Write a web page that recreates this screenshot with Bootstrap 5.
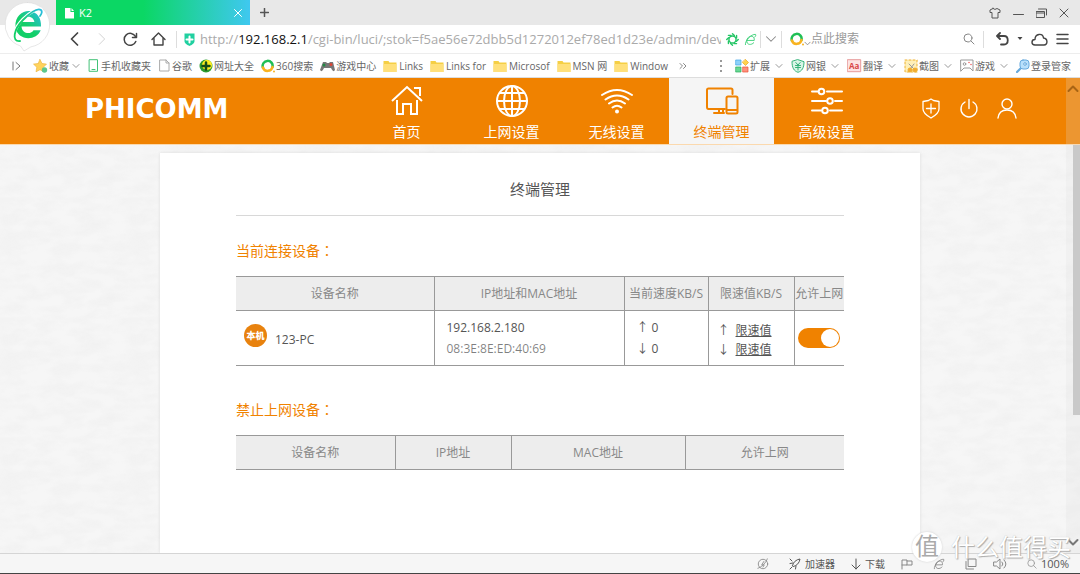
<!DOCTYPE html>
<html lang="zh-CN">
<head>
<meta charset="utf-8">
<meta name="viewport" content="width=device-width, initial-scale=1">
<title>K2</title>
<link href="https://cdn.jsdelivr.net/npm/bootstrap@5.3.0/dist/css/bootstrap.min.css" rel="stylesheet">
<style>
:root{--brand:#f08200}
body{font-family:"Open Sans","Noto Sans CJK SC",sans-serif;font-size:12px;line-height:16px;color:#555;background:#fff;overflow:hidden}
button{border:0;background:none;padding:0;color:inherit;font:inherit;display:flex;align-items:center;justify-content:center}
a{color:inherit;text-decoration:none}
svg{flex:none;display:block;fill:none;stroke:currentColor;stroke-linecap:round;stroke-linejoin:round}
svg.filled{stroke:none}
svg .f{fill:currentColor;stroke:none}
h1,h2{margin:0;font-weight:400}
.tabs{height:25px;background:#e8e8e8;padding-left:56px}
.page-tab{width:194px;background:linear-gradient(90deg,#0bd764 45%,#3fc8f0);color:#fff;font-size:11px;padding:0 8px}
.new-tab{width:28px}
.window-btns{gap:12px;padding-right:11px}
.brand-e{position:absolute;left:3px;top:0;z-index:3}
.address{height:28px;background:#fff;padding-left:60px}
.tool{width:28px;color:#444;flex:none}
.vr-line{width:1px;height:17px;background:#ddd;flex:none}
.url-box{gap:5px;padding:0 3px 0 7px;min-width:0}
.url{font-size:13px;color:#aaa;white-space:nowrap;overflow:hidden;min-width:0;width:0}
.url b{font-weight:400;color:#111}
.finder{width:201px;flex:none;color:#888}
.finder input{font-size:12px;line-height:16px;border:0;padding:0;outline:0;min-width:0;flex:1;background:none}
.finder input::placeholder{color:#999}
.endtools{width:96px;padding:0 11px 0 12px;color:#444;flex:none}
.marks{height:25px;border-top:1px solid #ededed;border-bottom:1px solid #ddd;font-size:10px;color:#666;padding:0 9px 0 12px;white-space:nowrap}
.marks a,.marks button{display:flex;align-items:center;gap:1px}
.marks .folder-link{gap:2px}
.marks .drop{margin-left:2px;color:#999}
.saved{gap:7px}
.extras{gap:8px}
.view{background-color:#f6f6f6;background-image:url("data:image/svg+xml,%3Csvg xmlns='http://www.w3.org/2000/svg' width='128' height='120'%3E%3Cfilter id='a' x='0' y='0' width='100%25' height='100%25'%3E%3CfeTurbulence type='fractalNoise' baseFrequency='.04 .09' numOctaves='3' stitchTiles='stitch'/%3E%3CfeColorMatrix values='0 0 0 0 .5 0 0 0 0 .5 0 0 0 0 .5 .17 0 0 0 -.06'/%3E%3C/filter%3E%3Crect width='128' height='120' filter='url(%23a)'/%3E%3C/svg%3E")}
.site-nav{height:66px;background:var(--brand);color:#fff;padding-left:85px;box-shadow:0 1px 0 #fbd9ae}
.wordmark{font:bold 26px/28px "DejaVu Sans",sans-serif;width:269px;margin-top:-4px}
.site-nav .entry{width:105px;font-size:14px;line-height:20px;padding-top:6px}
.site-nav .entry svg{margin-bottom:4px;stroke-width:2}
.site-nav .entry.active{background:#f5f5f5;color:var(--brand)}
.account{gap:18px;margin-left:42px;margin-bottom:6px}
.panel{width:71%;max-width:760px;background:#fff;margin:9px auto 0;padding:26px 76px 0;box-shadow:0 0 3px #ddd}
.panel h1{font-size:15px;line-height:20px;text-align:center;padding-bottom:16px;border-bottom:1px solid #d8d8d8}
.panel h2{font-size:14px;line-height:20px;color:var(--brand);margin-top:25px}
.panel .grid+h2{margin-top:34px}
.colon{font-family:"Noto Sans CJK TC",sans-serif;line-height:16px}
.grid{table-layout:fixed;width:100%;margin-top:15px;border-top:1px solid #999;border-bottom:1px solid #999}
.grid th{height:34px;background:#ededed;color:#888;font-weight:400;text-align:center;padding:0;white-space:nowrap}
.grid td{height:55px;border-top:1px solid #999;padding:0 0 0 12px}
.grid th+th,.grid td+td{border-left:1px solid #999}
.w-a{width:190px}.w-b{width:84px}.w-c{width:86px}.w-d{width:50px}
.w-e{width:116px}.w-f{width:174px}.w-g{width:159px}
.own{width:23px;height:23px;border-radius:50%;background:#e8820e;color:#fff;font-size:9px;font-weight:900;line-height:23px;text-align:center;margin:-5px 0 0 -4px}
.stack{line-height:21px}
.grid .stack-sm{line-height:19px;padding:3px 0 0 9px}
.limit{text-decoration:underline;margin-left:6px}
.form-switch .allow{width:42px;height:20px;margin:0;float:none;border:0;background-color:var(--brand);background-size:20px;box-shadow:none;display:block}
.form-switch .allow:checked{background-color:var(--brand);border-color:var(--brand);background-image:url("data:image/svg+xml,%3Csvg xmlns='http://www.w3.org/2000/svg' viewBox='-10 -10 20 20'%3E%3Ccircle r='9' fill='%23fff'/%3E%3C/svg%3E")}
.grid .cell-switch{padding:0 0 0 3px}
.rail{position:absolute;right:0;top:0;bottom:0;width:14px;background:rgba(225,225,225,.22)}
.rail i{width:7px;background:#c9c9c9;margin-top:67px;height:270px}
.rail svg{position:absolute;left:1px;color:#777}
.rail .up{top:6px;color:#a86414}.rail .down{bottom:6px}
.statusbar{height:21px;background:#f6f6f6;border-top:1px solid #d5d5d5;border-bottom:1px solid #444;font-size:10px;padding-right:11px;color:#555}
.statusbar .quiet{color:#888}
.zoom-level{font-size:11px}
.watermark{position:absolute;right:9px;bottom:11px;z-index:4;color:#fff;font-size:24px;line-height:32px;text-shadow:1px 1px 1px #aaa,0 0 1px #bbb;gap:9px;pointer-events:none}
.watermark span{width:30px;height:30px;border-radius:50%;background:#fff;color:#aaa;line-height:28px;text-align:center;text-shadow:none;box-shadow:0 0 2px #ccc}
</style>
</head>
<body class="vh-100 d-flex flex-column position-relative">
<svg width="0" height="0" class="position-absolute">
<symbol id="chev" viewBox="0 0 8 8"><path d="M1 2.500l3 3 3-3"/></symbol>
<symbol id="folder" viewBox="0 0 14 14"><path d="M.5 2h5l1 1.500h7V13H.5z" fill="#f5cf45" stroke="none"/><path d="M.5 5h13v8H.5z" fill="#ffe07a" stroke="none"/></symbol>
<symbol id="lens" viewBox="0 0 12 12"><circle cx="5" cy="5" r="4"/><path d="M8 8l3 3"/></symbol>
<symbol id="ring" viewBox="0 0 14 14"><path d="M1.900 8.500A5 5 0 1 1 11.500 8" stroke="#1fbf55" stroke-width="2.500"/><path d="M1.900 8.500A5 5 0 0 0 11.500 8" stroke="#f8b320" stroke-width="2.500"/><circle cx="13" cy="12.500" r="1" fill="#f8b320" stroke="none"/></symbol>
<symbol id="orbit-e" viewBox="0 0 14 14"><path d="M3 8h8c1-6-7-6-8 0-.5 5 5 5.500 7.500 2.500M1.500 12.500C1 8 8 1 12.500 1.500c1 1-1 3-1 3"/></symbol>
</svg>

<div class="brand-e"><svg class="filled" width="50" height="52" viewBox="0 0 50 52"><path d="M24.500 2.500a22.300 22.300 0 0 1 3.500 44.300L21 51l-3.500-5A22.300 22.300 0 0 1 24.500 2.500z" fill="#fff" stroke="#ddd" stroke-width=".7"/><defs><linearGradient id="eg" x1="0" y1="1" x2="1" y2="0"><stop offset=".45" stop-color="#12cf68"/><stop offset="1" stop-color="#2bbde5"/></linearGradient></defs><path fill="url(#eg)" fill-rule="evenodd" d="M38 26.500H18.500c.5 8 10 8 12 3.700h7.200C33.500 41.500 14 41 12.500 27 11.500 15 21 10 27 11c7 1 11.500 7 11 15.500zM18.700 22h12.700c-1-7-11.500-7-12.700 0z"/><path fill="none" stroke="#fff" stroke-width="3" d="M15 40C8 38 12 27 20 19c7-7 15-11 18-10"/><path fill="none" stroke="url(#eg)" stroke-width="1.800" d="M17 41C8 42 11 29 20 20c8-8 15-12 18-10 1.500 1.500.5 4-1 6"/></svg></div>

<div class="tabs d-flex flex-none">
 <div class="page-tab d-flex align-items-center"><svg width="11" height="12" viewBox="0 0 11 12"><path class="f" d="M1 1h5.500v4H10v6.500H1z"/><path class="f" d="M7.500 1L10 4H7.500z"/></svg><span class="ms-1">K2</span><button class="ms-auto" aria-label="关闭"><svg width="8" height="8" viewBox="0 0 8 8"><path d="M.5.5l7 7m0-7l-7 7"/></svg></button></div>
 <button class="new-tab" aria-label="新标签"><svg width="9" height="9" viewBox="0 0 9 9" stroke-width="1.500"><path d="M4.500.5v8M.5 4.500h8"/></svg></button>
 <div class="window-btns d-flex align-items-center ms-auto">
  <button aria-label="皮肤"><svg width="12" height="12" viewBox="0 0 12 12"><path d="M4 1.500L1 3v2.500h2V11h6V5.500h2V3L8 1.500Q6 3.500 4 1.500z"/></svg></button>
  <button aria-label="最小化"><svg width="11" height="12" viewBox="0 0 11 12"><path d="M.5 7.500h10"/></svg></button>
  <button aria-label="还原"><svg width="11" height="12" viewBox="0 0 11 12"><path d="M.5 4.500h8v6h-8zM.5 6h8M2.500 2h8v6"/></svg></button>
  <button aria-label="关闭窗口"><svg width="10" height="12" viewBox="0 0 10 12"><path d="M1 2l8 8m0-8l-8 8"/></svg></button>
 </div>
</div>

<div class="address d-flex align-items-center flex-none">
 <button class="tool" aria-label="后退"><svg width="9" height="14" viewBox="0 0 9 14" stroke-width="1.700"><path d="M7.500 1L1.500 7l6 6"/></svg></button>
 <button class="tool" aria-label="前进"><svg width="8" height="14" viewBox="0 0 9 14" color="#ccc"><path d="M1.500 1l6 6-6 6"/></svg></button>
 <button class="tool" aria-label="刷新"><svg width="15" height="15" viewBox="0 0 15 15" stroke-width="1.500"><path d="M12.800 9.500A6 6 0 1 1 12.500 4.500M13.500 1.500v4h-4"/></svg></button>
 <button class="tool" aria-label="主页"><svg width="15" height="14" viewBox="0 0 15 14" stroke-width="1.400"><path d="M1 7.500l6.500-6.500L14 7.500M3 6.500V13h9V6.500"/></svg></button>
 <div class="vr-line ms-1"></div>
 <div class="url-box d-flex align-items-center flex-fill">
  <svg class="filled" width="11" height="13" viewBox="0 0 11 13"><path fill="#20d0a0" d="M.5.5h10V8c0 2.500-3 4-5 5-2-1-5-2.500-5-5z"/><path d="M5.500 3.500v6m-3-3h6" stroke="#fff" stroke-width="2"/></svg>
  <div class="url flex-fill" role="textbox" aria-label="地址" contenteditable="true" spellcheck="false">http://<b>192.168.2.1</b>/cgi-bin/luci/;stok=f5ae56e72dbb5d1272012ef78ed1d23e/admin/devi</div>
  <svg width="13" height="13" viewBox="0 0 14 14" color="#24c566" stroke-width="1.500"><circle cx="7" cy="7" r="3.800"/><path d="M7 .8l2 2M11.400 2.600v2.800M13.200 7l-2 2M11.400 11.400H8.600M7 13.200l-2-2M2.600 11.400V8.600M.8 7l2-2M2.600 2.600h2.800"/></svg>
  <svg width="13" height="13" color="#3ccf78"><use href="#orbit-e"/></svg>
 </div>
 <div class="vr-line"></div>
 <button class="px-1" aria-label="历史"><svg width="12" height="12" viewBox="0 0 8 8" color="#888" stroke-width=".7"><use href="#chev"/></svg></button>
 <div class="vr-line"></div>
 <div class="finder d-flex align-items-center">
  <svg class="ms-2" width="14" height="14"><use href="#ring"/></svg><svg width="7" height="7" class="mt-2"><use href="#chev"/></svg>
  <input type="text" placeholder="点此搜索" aria-label="点此搜索"><button class="me-2" aria-label="搜索"><svg width="12" height="12"><use href="#lens"/></svg></button>
 </div>
 <div class="vr-line"></div>
 <div class="endtools d-flex align-items-center justify-content-between">
  <button aria-label="撤销"><svg width="13" height="14" viewBox="0 0 13 14" stroke-width="1.800"><path d="M4 1L1 4l3 3M1.500 4H8c5 0 5 8.500 0 8.500H5"/></svg></button>
  <svg width="6" height="4" viewBox="0 0 6 4"><path class="f" d="M.5 0h5L3 3z"/></svg>
  <button aria-label="云"><svg width="17" height="13" viewBox="0 0 17 13" stroke-width="1.400"><path d="M4 12C0 12 0 6.500 4 6.500 4 0 12 0 12.500 5c4.500.5 4.500 7 .5 7z"/></svg></button>
  <button aria-label="菜单"><svg width="13" height="12" viewBox="0 0 13 12" stroke-width="1.500"><path d="M1 1.500h11M1 6h11M1 10.500h11"/></svg></button>
 </div>
</div>

<div class="marks d-flex align-items-center flex-none">
 <button class="me-2 pe-1" aria-label="展开"><svg width="9" height="10" viewBox="0 0 9 10" color="#777"><path d="M1 1v8M4 1.500L8 5 4 8.500"/></svg></button>
 <div class="saved d-flex align-items-center">
  <button><svg class="filled" width="15" height="14" viewBox="0 0 15 14"><path fill="#ffd35c" stroke="#e9ae36" stroke-width=".6" d="M7 .5l2 4 4.500.6-3.200 3.200.8 4.500L7 10.700l-4 2.100.8-4.500L.5 5.100 5 4.500z"/><circle cx="11.500" cy="11" r="2.700" fill="#5cc78d"/></svg>收藏<svg class="drop" width="8" height="8"><use href="#chev"/></svg></button>
  <a href="#"><svg width="13" height="13" viewBox="0 0 13 13" color="#43c277"><path d="M2.500.7h8v11.600h-8zM5 10.500h3"/></svg>手机收藏夹</a>
  <a href="#"><svg width="13" height="13" viewBox="0 0 13 13" color="#aaa"><path d="M2 1h6l3 3v8H2zM8 1v3h3"/></svg>谷歌</a>
  <a href="#"><svg class="filled" width="14" height="14" viewBox="0 0 14 14"><circle cx="7" cy="7" r="6.500" fill="#2c9b2e"/><circle cx="8" cy="6" r="5" fill="#ffee20"/><path d="M7 3.500v7M3.500 7h7" stroke="#164d18" stroke-width="2.500"/></svg>网址大全</a>
  <a href="#"><svg width="14" height="14"><use href="#ring"/></svg>360搜索</a>
  <a href="#"><svg class="filled" width="15" height="12" viewBox="0 0 15 12"><path fill="#777" d="M3 2h3l1 1h2l1-1h3l2 8q-2 3-4-2H4q-2 5-4 2z"/><circle cx="4" cy="5" r="1.500" fill="#284"/><circle cx="11" cy="4.500" r="1.500" fill="#d43"/></svg>游戏中心</a>
  <a href="#" class="folder-link"><svg width="14" height="14"><use href="#folder"/></svg>Links</a>
  <a href="#" class="folder-link"><svg width="14" height="14"><use href="#folder"/></svg>Links for</a>
  <a href="#" class="folder-link"><svg width="14" height="14"><use href="#folder"/></svg>Microsof</a>
  <a href="#" class="folder-link"><svg width="14" height="14"><use href="#folder"/></svg>MSN 网</a>
  <a href="#" class="folder-link"><svg width="14" height="14"><use href="#folder"/></svg>Window</a>
  <button class="ms-1" aria-label="更多"><svg width="8" height="8" viewBox="0 0 8 8" color="#888"><path d="M1 1.500L3.500 4 1 6.500M4.500 1.500L7 4 4.500 6.500"/></svg></button>
 </div>
 <div class="extras d-flex align-items-center ms-auto">
  <svg class="me-1" width="4" height="14" viewBox="0 0 4 14" color="#999"><path class="f" d="M1 1h2v2H1zM1 6h2v2H1zM1 11h2v2H1z"/></svg>
  <button><svg width="14" height="14" viewBox="0 0 14 14" stroke-width=".7"><path fill="#8ed1fa" stroke="#3da5e8" d="M1 1h5v5H1z"/><path fill="#ffd34d" stroke="#e8a51e" d="M10.500.5l3 3-3 3-3-3z"/><path fill="#68d894" stroke="#28ad5a" d="M1 8h5v5H1z"/><path fill="#ff917e" stroke="#e85338" d="M8 8h5v5H8z"/></svg>扩展<svg class="drop ms-1" width="8" height="8"><use href="#chev"/></svg></button>
  <button><svg width="14" height="14" viewBox="0 0 14 14" color="#35b37a"><path fill="#d9f5e6" d="M7 .7l6 2C13 9 11 12 7 13.300 3 12 1 9 1 2.700z"/><path d="M4.800 3.500L7 6l2.200-2.500M7 6v5M4.500 6.500h5M4.500 8.500h5"/></svg>网银<svg class="drop ms-1" width="8" height="8"><use href="#chev"/></svg></button>
  <button><svg width="15" height="14" viewBox="0 0 15 14" color="#e79b9b"><path fill="#fde3e3" d="M.7.7h13v12H.7z"/><text x="2" y="10" font-size="8" font-weight="700" fill="#d84848" stroke="none">Aa</text></svg>翻译<svg class="drop ms-1" width="8" height="8"><use href="#chev"/></svg></button>
  <button><svg width="14" height="14" viewBox="0 0 14 14" color="#eeb12f"><path fill="#fff0b8" stroke-dasharray="2 2" d="M1 1h12v12H1z"/><path d="M5 5l5 5m0-5l-4 5" stroke="#999"/><circle cx="6" cy="11" r="2" fill="#f5a832"/><circle cx="11" cy="11" r="2" fill="#f5a832"/></svg>截图<svg class="drop ms-1" width="8" height="8"><use href="#chev"/></svg></button>
  <button><svg width="14" height="13" viewBox="0 0 14 13" color="#999"><path d="M1 1h12v11l-3-3H4l-3 3z"/><circle cx="4.500" cy="5" r="1.300"/><path stroke="#e55" stroke-width="1.500" d="M9 3.500v.1M11 5.500v.1"/></svg>游戏<svg class="drop ms-1" width="8" height="8"><use href="#chev"/></svg></button>
  <button><svg width="14" height="14" viewBox="0 0 14 14" color="#66a9dd"><path d="M5 9l-4 4" stroke-width="2.200"/><rect x="4" y="1" width="9" height="9" rx="3" fill="#b9e0fb"/><circle cx="9" cy="5" r="1.300" fill="#fff"/></svg>登录管家</button>
 </div>
</div>

<main class="view flex-fill d-flex flex-column position-relative overflow-hidden">
 <nav class="site-nav d-flex align-items-center flex-none">
  <a href="#" class="wordmark">PHICOMM</a>
  <a href="#" class="entry h-100 d-flex flex-column align-items-center"><svg width="34" height="34" viewBox="0 0 34 34"><path d="M2 17L17 3l15 14M24 4h6v8M7 16v14h6V20h8v10h6V16" stroke-linecap="butt" stroke-linejoin="miter"/></svg>首页</a>
  <a href="#" class="entry h-100 d-flex flex-column align-items-center"><svg width="34" height="34" viewBox="0 0 34 34"><circle cx="17" cy="17" r="15"/><ellipse cx="17" cy="17" rx="8" ry="15"/><path d="M17 2v30M2 17h30M5 9h24M5 25h24"/></svg>上网设置</a>
  <a href="#" class="entry h-100 d-flex flex-column align-items-center"><svg width="34" height="34" viewBox="0 0 34 34"><path d="M2 11q15-10 30 0M5.500 15.500q11.500-8 23 0M9 19.500q8-6 16 0M12.500 23.500q4.500-3.500 9 0"/><circle class="f" cx="17" cy="27.500" r="2"/></svg>无线设置</a>
  <a href="#" class="entry active h-100 d-flex flex-column align-items-center" aria-current="page"><svg width="34" height="34" viewBox="0 0 34 34"><path d="M20 25H3.500Q2 25 2 23V6q0-1.500 1.500-1.500H26q1.500 0 1.500 1.500v4M14 25v3M18 25v3M9 29h10"/><rect x="21.500" y="12.500" width="11" height="17" rx="1.500"/><path d="M22 26h10"/></svg>终端管理</a>
  <a href="#" class="entry h-100 d-flex flex-column align-items-center"><svg width="34" height="34" viewBox="0 0 34 34"><path d="M2 7.500h6M17 7.500h15M2 17h14M25 17h7M2 26.500h9M20 26.500h12"/><circle cx="11.500" cy="7.500" r="2.800"/><circle cx="20" cy="17" r="2.800"/><circle cx="15" cy="26.500" r="2.800"/></svg>高级设置</a>
  <div class="account d-flex align-items-center">
   <button aria-label="安全"><svg width="20" height="21" viewBox="0 0 20 21" stroke-width="1.300"><path d="M10 1l2.500 1.500L18 3.500V11q0 4.500-8 9-8-4.500-8-9V3.500l5.500-1zM10 6v9M5.500 10.500h9"/></svg></button>
   <button aria-label="重启"><svg width="20" height="21" viewBox="0 0 20 21" stroke-width="1.400"><path d="M6 4a8 8 0 1 0 8 0M10 1.500v9"/></svg></button>
   <button aria-label="帐户"><svg width="20" height="21" viewBox="0 0 20 21" stroke-width="1.400"><circle cx="10" cy="6" r="5"/><path d="M1 20q1-8 9-8t9 8"/></svg></button>
  </div>
 </nav>

 <section class="panel flex-fill">
  <h1>终端管理</h1>
  <h2>当前连接设备<span class="colon" lang="zh-TW">：</span></h2>
  <table class="grid">
   <colgroup><col><col class="w-a"><col class="w-b"><col class="w-c"><col class="w-d"></colgroup>
   <thead><tr><th>设备名称</th><th>IP地址和MAC地址</th><th>当前速度KB/S</th><th>限速值KB/S</th><th>允许上网</th></tr></thead>
   <tbody><tr>
    <td><div class="d-flex align-items-center gap-2"><span class="own">本机</span><span class="pt-1">123-PC</span></div></td>
    <td class="stack"><div>192.168.2.180</div><div class="text-black-50">08:3E:8E:ED:40:69</div></td>
    <td class="stack"><div>↑ 0</div><div>↓ 0</div></td>
    <td class="stack-sm"><div>↑<a href="#" class="limit">限速值</a></div><div>↓<a href="#" class="limit">限速值</a></div></td>
    <td class="cell-switch"><div class="form-switch p-0"><input class="form-check-input allow" type="checkbox" role="switch" checked aria-label="允许上网"></div></td>
   </tr></tbody>
  </table>
  <h2>禁止上网设备<span class="colon" lang="zh-TW">：</span></h2>
  <table class="grid">
   <colgroup><col><col class="w-e"><col class="w-f"><col class="w-g"></colgroup>
   <thead><tr><th>设备名称</th><th>IP地址</th><th>MAC地址</th><th>允许上网</th></tr></thead>
  </table>
 </section>

 <div class="rail d-flex justify-content-end"><svg class="up" width="12" height="9" viewBox="0 0 12 9" stroke-width="2"><path d="M1.500 7L6 2.500 10.500 7"/></svg><i></i><svg class="down" width="12" height="9" viewBox="0 0 12 9" stroke-width="2"><path d="M1.500 2L6 6.500 10.500 2"/></svg></div>
</main>

<footer class="statusbar d-flex align-items-center justify-content-end flex-none">
 <button class="quiet me-3" aria-label="兼容"><svg width="12" height="12" viewBox="0 0 14 14"><circle cx="7" cy="7" r="5.500"/><path d="M1 12C5 11 11 5 12 1M8 4L5.500 8h3L7 10.500"/></svg></button>
 <button class="ms-1 me-3 gap-1"><svg width="12" height="12" viewBox="0 0 12 12"><path d="M3.500 7.500Q5 2 11 1q-1 6-6.500 7.500zM4 5L1 5.500M7 8l-.5 3M1 11l2-2M1 1l2 2"/></svg>加速器</button>
 <button class="me-3 gap-1"><svg width="10" height="12" viewBox="0 0 10 12"><path d="M5 1v10M1 7l4 4 4-4"/></svg>下载</button>
 <button class="quiet me-3" aria-label="标记"><svg width="12" height="12" viewBox="0 0 12 12"><path d="M1 11V2h5v5H1M6 3h5v4H6"/></svg></button>
 <button class="quiet mx-1" aria-label="内核"><svg width="12" height="12"><use href="#orbit-e"/></svg></button>
 <button class="quiet mx-3" aria-label="窗口"><svg width="12" height="12" viewBox="0 0 12 12"><path d="M3.500 1h7.500v7.500H3.500zM1 3.500V11h7.500"/></svg></button>
 <button class="quiet me-3" aria-label="声音"><svg width="14" height="12" viewBox="0 0 14 12"><path d="M1 4h2.500L7 1v10L3.500 8H1zM9 4q2 2 0 4M11 2q4 4 0 8"/></svg></button>
 <button class="gap-1 ms-1 zoom-level"><svg width="10" height="10" color="#999"><use href="#lens"/></svg><span>100%</span></button>
</footer>
<div class="watermark d-flex align-items-center"><span>值</span>什么值得买</div>
<script src="https://cdn.jsdelivr.net/npm/bootstrap@5.3.0/dist/js/bootstrap.bundle.min.js"></script>
</body>
</html>
